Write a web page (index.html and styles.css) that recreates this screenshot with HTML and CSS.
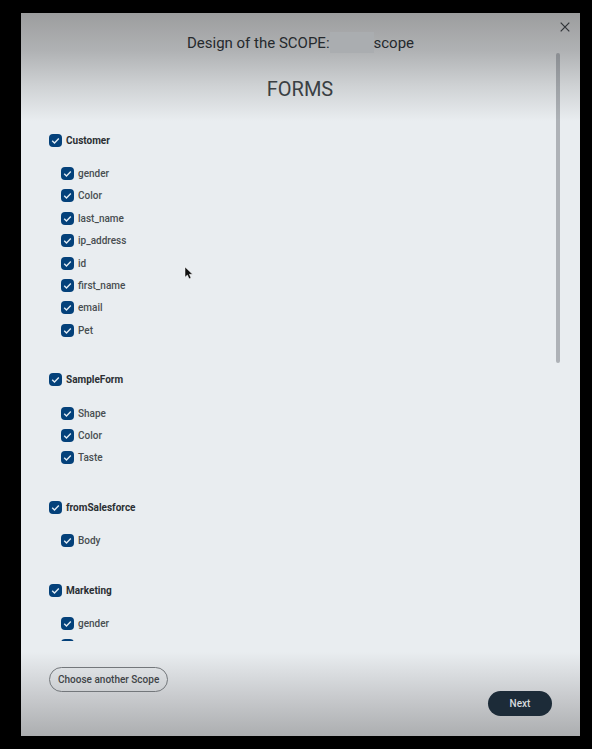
FILE: index.html
```html
<!DOCTYPE html>
<html lang="en">
<head>
<meta charset="utf-8">
<meta name="viewport" content="width=device-width, initial-scale=1">
<title>Design of the scope</title>
<link rel="stylesheet" href="styles.css">
</head>
<body>
<main class="dialog" role="dialog" aria-labelledby="title">
  <header class="header">
    <h1 class="title" id="title">Design of the SCOPE:<span class="redacted"></span>scope</h1>
    <button class="close" type="button" aria-label="Close">
      <svg viewBox="0 0 10 10" width="10" height="10"><path d="M0.7 0.7 9.3 9.3M9.3 0.7 0.7 9.3"/></svg>
    </button>
  </header>
  <div class="body">
    <div class="forms">
      <h2 class="heading">FORMS</h2>
      <section class="group">
        <label class="check group-name"><input type="checkbox" checked>Customer</label>
        <ul class="fields">
          <li><label class="check"><input type="checkbox" checked>gender</label></li>
          <li><label class="check"><input type="checkbox" checked>Color</label></li>
          <li><label class="check"><input type="checkbox" checked>last_name</label></li>
          <li><label class="check"><input type="checkbox" checked>ip_address</label></li>
          <li><label class="check"><input type="checkbox" checked>id</label></li>
          <li><label class="check"><input type="checkbox" checked>first_name</label></li>
          <li><label class="check"><input type="checkbox" checked>email</label></li>
          <li><label class="check"><input type="checkbox" checked>Pet</label></li>
        </ul>
      </section>
      <section class="group">
        <label class="check group-name"><input type="checkbox" checked>SampleForm</label>
        <ul class="fields">
          <li><label class="check"><input type="checkbox" checked>Shape</label></li>
          <li><label class="check"><input type="checkbox" checked>Color</label></li>
          <li><label class="check"><input type="checkbox" checked>Taste</label></li>
        </ul>
      </section>
      <section class="group">
        <label class="check group-name"><input type="checkbox" checked>fromSalesforce</label>
        <ul class="fields">
          <li><label class="check"><input type="checkbox" checked>Body</label></li>
        </ul>
      </section>
      <section class="group">
        <label class="check group-name"><input type="checkbox" checked>Marketing</label>
        <ul class="fields">
          <li><label class="check"><input type="checkbox" checked>gender</label></li>
          <li><label class="check"><input type="checkbox" checked aria-label="Field"></label></li>
        </ul>
      </section>
    </div>
    <div class="scrollbar"></div>
  </div>
  <footer class="footer">
    <button class="button outlined" type="button">Choose another Scope</button>
    <button class="button filled" type="button">Next</button>
  </footer>
</main>
<svg class="pointer" viewBox="0 0 10 14" width="10" height="14"><path d="M1 1V11.2L3.4 9 5.1 12.8 7 12 5.4 8.3H8.6Z"/></svg>
</body>
</html>
```
FILE: styles.css
```css
* {
  box-sizing: border-box;
}

html {
  font-size: 14px;
}

body {
  display: flex;
  height: 100vh;
  margin: 0;
  padding: 13px 12px 13px 21px;
  background: #000;
  color: #484d51;
  font-family: Roboto, "Liberation Sans", sans-serif;
}

.dialog {
  display: flex;
  flex: 1;
  flex-direction: column;
  background:
    linear-gradient(#9c9d9e, #b0b2b4 38px, #ced1d3 72px, #e9edf0 108px, transparent 108px),
    linear-gradient(to top, #acaeb0, #c9cbce 40px, #e9edf0 84px);
}

.header {
  display: flex;
  position: relative;
  justify-content: center;
  padding-top: 20px;
}

.title {
  display: flex;
  margin: 0;
  color: #25292d;
  font-size: 15px;
  font-weight: 400;
  line-height: 20px;
}

.redacted {
  width: 44px;
  height: 21px;
  margin: -1px 0 0;
  background: #aaadb0;
}

.close {
  display: flex;
  position: absolute;
  top: 9px;
  right: 10px;
  padding: 0;
  border: 0;
  background: none;
}

.close path {
  fill: none;
  stroke: #303438;
  stroke-width: 1.2;
}

.body {
  display: flex;
  flex: 1;
  min-height: 0;
  padding: 0 20px 0 28px;
}

.forms {
  flex: 1;
  overflow-y: auto;
  scrollbar-width: none;
}

.heading {
  margin: 22px 0 26px;
  padding-right: 5px;
  color: #3a3f43;
  font-size: 20px;
  font-weight: 400;
  line-height: 28px;
  text-align: center;
}

.scrollbar {
  width: 4px;
  height: 310px;
  border-radius: 2px;
  background: rgb(70 76 82 / 36%);
}

.group {
  margin-bottom: 27px;
}

.check {
  display: flex;
  align-items: center;
  gap: 4px;
  height: 1.6rem;
  font-size: 10px;
  font-weight: 500;
}

.group-name {
  margin-bottom: 11px;
  color: #2b2f33;
  font-weight: 700;
}

.fields {
  margin: 0;
  padding: 0 0 0 12px;
  list-style: none;
}

.check input {
  flex: none;
  width: 13px;
  height: 13px;
  margin: 0;
  border-radius: 4px;
  appearance: none;
  background: #04417a url("data:image/svg+xml,%3Csvg xmlns='http://www.w3.org/2000/svg' viewBox='0 0 13 13'%3E%3Cpath d='M3.2 6.7 5.5 8.9 9.8 4.6' fill='none' stroke='%23e4edf5' stroke-width='1.4'/%3E%3C/svg%3E") center / contain;
}

.footer {
  display: flex;
  align-items: flex-start;
  justify-content: space-between;
  padding: 26px 28px 20px;
}

.button {
  height: 25px;
  border-radius: 13px;
  font-family: inherit;
  font-size: 10px;
  font-weight: 500;
}

.outlined {
  padding: 0 8px;
  border: 1px solid #73777b;
  background: none;
  color: #3e4347;
}

.filled {
  width: 64px;
  margin-top: 24px;
  border: 0;
  background: #1c2b38;
  color: #d5dade;
}

.pointer {
  position: absolute;
  top: 266px;
  left: 184px;
  fill: #111;
  stroke: #fff;
  stroke-width: 0.5;
}
```
